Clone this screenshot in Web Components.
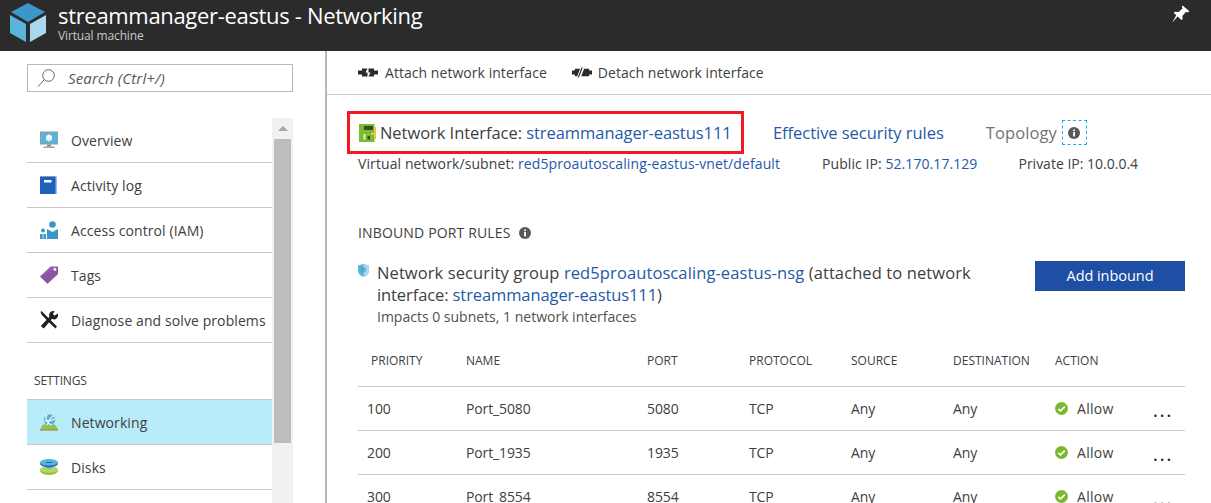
<!DOCTYPE html>
<html><head><meta charset="utf-8"><title>Networking</title>
<style>
html,body{margin:0;padding:0;height:503px;overflow:hidden;background:#fff;font-family:"Open Sans","Noto Sans",sans-serif;color:#404040}
</style></head><body>
<az-app></az-app>
<script>
const ICONS={
cube:`<svg width="36" height="40" viewBox="0 0 36 40"><path d="M18 0 35 9 18 19 1 9Z" fill="#3b97c9"/><path d="M0 12 16 21V39L0 30Z" fill="#59b4d9"/><path d="M36 12 20 21V39L36 30Z" fill="#a9d8ee"/></svg>`,
pin:`<svg width="19" height="19" viewBox="0 0 18 18"><path d="M11 0.5 17.5 6 15.8 7 14.3 6.4 10.8 10.5 11 13.5 9.8 14.3 6.3 10.8 1 16.8 5 9.8 2.7 7.6 3.6 6.3 7.3 6.6 11 3 10.2 1.6Z" fill="#fff"/></svg>`,
search:`<svg width="20" height="20" viewBox="0 0 20 20" fill="none" stroke="#666" stroke-width="1"><circle cx="12.5" cy="7.5" r="5.8"/><path d="M8.3 11.7 2 18.5"/></svg>`,
overview:`<svg width="18" height="18" viewBox="0 0 18 18"><rect x="0" y="1" width="18" height="12" fill="#59b4d9"/><rect x="0" y="1" width="18" height="12" fill="none" stroke="#9a9a9a" stroke-width="1"/><path d="M9 3.5 12 5.2V8.7L9 10.4 6 8.7V5.2Z" fill="#e6f4fa"/><path d="M9 7 12 5.2 9 3.5 6 5.2Z" fill="#fff"/><rect x="7" y="13.500" width="4" height="2" fill="#8a8a8a"/><rect x="3.500" y="15.500" width="11" height="1.500" fill="#a0a0a0"/></svg>`,
log:`<svg width="18" height="18" viewBox="0 0 18 18"><rect x="1" y="0.500" width="16" height="17.500" fill="#9dbce6"/><rect x="0" y="0.500" width="15.500" height="17.500" fill="#1e62bd"/><rect x="4" y="4" width="7.500" height="2.500" fill="#fff"/></svg>`,
iam:`<svg width="18" height="18" viewBox="0 0 18 18"><circle cx="12.500" cy="3.500" r="3.300" fill="#3999c6"/><path d="M7 8 12.500 11 18 8V18H7Z" fill="#3999c6"/><circle cx="3" cy="9.500" r="2" fill="#3999c6"/><path d="M0 13H6V18H0Z" fill="#3999c6"/><path d="M3 13V18" stroke="#fff" stroke-width=".7"/></svg>`,
tag:`<svg width="18" height="18" viewBox="0 0 18 18"><path d="M0 10.500 10.500 0.500H18V8L7.500 17.800Z" fill="#9e5fb0"/><path d="M0 10.500 7.500 17.800 18 8V0.500Z" fill="#7f4a92" opacity=".55"/><circle cx="15" cy="3.500" r="1.400" fill="#fff"/></svg>`,
tools:`<svg width="18" height="18" viewBox="0 0 18 18"><path d="M1.500 0 8 6.500 9.800 8.300 17 15.500 15.500 17.500 7.500 10 1.500 3.500 0.500 1Z" fill="#1f1f1f"/><path d="M17.500 2.500A4 4 0 0 1 12 7.800L3.800 17.500 0.800 15 9.500 5.800A4 4 0 0 1 14.800 0.500L12.800 2.800 14.500 4.700Z" fill="#1f1f1f"/></svg>`,
net:`<svg width="18" height="17" viewBox="0 0 18 17"><path d="M3 10.500H15L18 15.500H0Z" fill="#8cc63f"/><rect x="0" y="15" width="18" height="1.700" fill="#a89a64"/><circle cx="9.500" cy="6" r="5.700" fill="#59b4d9"/><path d="M7 .8C4.500 4.500 7 9 11.500 11.300M13.500 2C10.500 3.500 8.500 6.500 7.500 11.200M4.500 6.500C7.500 7.500 11 7 14.800 5" stroke="#fff" stroke-width="1.100" fill="none"/></svg>`,
disk:`<svg width="18" height="16" viewBox="0 0 18 16"><ellipse cx="9" cy="11.800" rx="9" ry="4.200" fill="#8cc63f"/><ellipse cx="9" cy="10.500" rx="9" ry="3.300" fill="#b4d85f"/><rect x="6.500" y="6.500" width="5" height="3.500" fill="#7fa8c8"/><ellipse cx="9" cy="4.500" rx="9" ry="3.800" fill="#1e62bd"/><ellipse cx="9" cy="3.300" rx="9" ry="3.300" fill="#59b4d9"/><rect x="6" y="3" width="6" height="1" fill="#1e62bd"/></svg>`,
attach:`<svg width="20" height="9" viewBox="0 0 20 9" fill="#2b2b2b"><path d="M0 2.500H4V.5H9.500L7.500 4.500H9.500V8.500H4V6.500H0Z"/><path d="M20 6.500H16V8.500H10.500L12.500 4.500H10.500V.5H16V2.500H20Z"/></svg>`,
detach:`<svg width="20" height="11" viewBox="0 0 21 11" fill="#2b2b2b" style="margin-right:-1px"><path d="M0 3.500H3V1.500H8.500L5.500 9.500H3V7.500H0Z"/><path d="M10 .2H11.300L7.300 10.800H6Z"/><path d="M21 3.500H18V1.500H12.700L9.700 9.500H18V7.500H21Z"/></svg>`,
nic:`<svg width="17" height="18" viewBox="0 0 17 18"><rect x="0" y="0" width="15.500" height="18" fill="#7cbb2e"/><rect x="15.500" y="3" width="1.500" height="12" fill="#f2c811"/><rect x="5" y="2" width="9" height="4" fill="#3a4a2a"/><rect x="4.500" y="10" width="2" height="5.500" fill="#dfeecb"/><rect x="8.500" y="12" width="2.500" height="3.500" fill="#3a4a2a"/><rect x="12.500" y="9" width="2" height="1.500" fill="#dfeecb"/></svg>`,
info:`<svg width="12" height="12" viewBox="0 0 11 11"><circle cx="5.500" cy="5.500" r="5.500" fill="#595959"/><rect x="4.700" y="4.600" width="1.700" height="4" fill="#fff"/><rect x="4.700" y="2.300" width="1.700" height="1.500" fill="#fff"/></svg>`,
shield:`<svg width="11" height="13" viewBox="0 0 11 13"><path d="M5.500 0 11 1.500V6.500C11 10 8 12 5.500 13 3 12 0 10 0 6.500V1.500Z" fill="#59b4d9"/><path d="M5.500 0 11 1.500V6.500C11 10 8 12 5.500 13Z" fill="#a9d8ee"/><path d="M5.500 3 8 4V7L5.500 9 3 7V4Z" fill="#3999c6" opacity=".6"/></svg>`,
allow:`<svg width="13" height="13" viewBox="0 0 13 13"><circle cx="6.500" cy="6.500" r="6.500" fill="#7ab92d"/><path d="M3.300 6.800 5.500 8.900 9.800 4.600" fill="none" stroke="#fff" stroke-width="1.700"/></svg>`
};
function comp(name,html,init){
  customElements.define(name,class extends HTMLElement{
    constructor(){super();this.attachShadow({mode:'open'});}
    connectedCallback(){this.shadowRoot.innerHTML=typeof html==='function'?html(this):html;if(init)init(this);}
  });
}
comp('az-header',h=>`<style>
:host{display:flex;height:51px;background:#2b2b2b;color:#fff;box-sizing:border-box;padding:3px 21px 0 10px;overflow:hidden;position:relative}
.ic{width:36px;height:40px;flex:none}
.t{margin-left:12px;display:flex;flex-direction:column;flex:1}
h1{margin:-2px 0 0;font-weight:400;font-size:22px;line-height:28px;letter-spacing:-.32px;white-space:nowrap}
small{font-size:12px;line-height:14px;margin-top:0;color:#c8c8c8;letter-spacing:-.13px}
.pin{margin-top:2px;flex:none}
</style><div class="ic">${ICONS.cube}</div><div class="t"><h1>${h.getAttribute('title')}</h1><small>${h.getAttribute('sub')}</small></div><div class="pin">${ICONS.pin}</div>`);
comp('az-search',h=>`<style>
:host{display:flex;align-items:center;box-sizing:border-box;width:266px;height:28px;border:1px solid #b8b8b8;padding-left:8px;background:#fff}
span{margin-left:12px;font-style:italic;font-size:15px;letter-spacing:.15px;color:#595959}
svg{display:block}
</style>${ICONS.search}<span>${h.getAttribute('text')}</span>`);
comp('az-nav-item',h=>`<style>
:host{display:flex;align-items:center;box-sizing:border-box;height:45px;border-bottom:1px solid #c8c8c8;color:#404040;font-size:14px;letter-spacing:.09px;white-space:nowrap}
:host([sel]){background:#b9ecfa;border-top:1px solid #c8c8c8;height:46px;margin-top:-1px}
i{width:18px;height:18px;margin:0 13px 0 13px;display:flex;align-items:center;flex:none}
svg{display:block}
</style><i>${ICONS[h.getAttribute('icon')]}</i><slot></slot>`);
comp('az-scrollbar',`<style>
:host{display:flex;flex-direction:column;width:21px;background:#f1f1f1;flex:none;align-items:center}
.up{height:21px;display:flex;align-items:center;justify-content:center;flex:none}
.up b{display:block;width:0;height:0;border:5px solid transparent;border-top:0;border-bottom:5px solid #a6a6a6}
.th{width:17px;height:304px;background:#bdbdbd;flex:none}
</style><div class="up"><b></b></div><div class="th"></div>`);
comp('az-sidebar',`<style>
:host{display:block;width:327px;box-sizing:border-box;border-right:2px solid #b8b8b8;padding:13px 0 0 27px;flex:none;overflow:hidden;height:452px}
.menu{display:flex;margin-top:26px;width:266px;height:400px}
.items{width:245px;flex:none}
</style><az-search text="Search (Ctrl+/)"></az-search><div class="menu"><div class="items"><slot></slot></div><az-scrollbar></az-scrollbar></div>`);
comp('az-section',h=>`<style>
:host{display:block;height:57px;box-sizing:border-box;padding:30px 0 0 7px;font-size:12px;line-height:16px;color:#404040;letter-spacing:-.2px}
</style><slot></slot>`);
comp('az-tool',h=>`<style>
:host{display:inline-flex;align-items:center;gap:7px;font-size:14px;letter-spacing:.045px;color:#404040;white-space:nowrap}
svg{display:block}
</style>${ICONS[h.getAttribute('icon')]}<slot></slot>`);
comp('az-summary',`<style>
:host{display:block;padding:16px 0 0 31px}
.r1{display:flex;align-items:center;height:43px;font-size:16.5px;letter-spacing:-.05px;white-space:nowrap}
.box{box-sizing:border-box;width:397px;height:43px;margin-left:-11px;border:3px solid #f01a24;display:flex;align-items:center;padding-left:9px;gap:4px;flex:none}
.box svg{display:block}
.eff{margin-left:29px;color:#2559a8}
.top{margin-left:42px;color:#737373;letter-spacing:.1px}
.dash{margin-left:5px;width:25px;height:25px;box-sizing:border-box;border:1px dashed #1eaee6;display:flex;align-items:center;justify-content:center}
.dash svg{display:block}
.r2{display:flex;font-size:14px;letter-spacing:.07px;line-height:18px;white-space:nowrap;margin-top:1px}
.r2 span:nth-child(1){letter-spacing:.1px}
.r2 span:nth-child(2){margin-left:42px}
.r2 span:nth-child(3){margin-left:41px;letter-spacing:0}
a{color:#2559a8}
</style><div class="r1"><div class="box">${ICONS.nic}<span>Network Interface: <a>streammanager-eastus111</a></span></div><span class="eff">Effective security rules</span><span class="top">Topology</span><span class="dash">${ICONS.info}</span></div>
<div class="r2"><span>Virtual network/subnet: <a>red5proautoscaling-eastus-vnet/default</a></span><span>Public IP: <a>52.170.17.129</a></span><span>Private IP: 10.0.0.4</span></div>`);
comp('az-nsg',`<style>
:host{display:block;padding:0 26px 0 31px;position:relative}
.h{display:flex;align-items:center;gap:8px;font-size:14px;letter-spacing:.15px;line-height:18px;padding-top:51px}
.h svg{display:block}
.g{display:flex;justify-content:space-between;margin-top:20px}
.l{display:flex;gap:8px}
.l svg{display:block;margin-top:2px;flex:none}
.t{font-size:16.5px;line-height:22px;letter-spacing:-.1px;width:640px}
.w{letter-spacing:.1px}
.s{font-size:14px;line-height:18px;margin-top:2px;color:#505050}
a{color:#2559a8}
button{all:unset;box-sizing:border-box;width:150px;height:30px;background:#1e4fa5;color:#fff;text-align:center;font-size:14.5px;letter-spacing:-.05px;line-height:28px;margin-top:-1px}
</style><div class="h">INBOUND PORT RULES ${ICONS.info}</div>
<div class="g"><div class="l">${ICONS.shield}<div><div class="t"><span class="w">Network security group <a>red5proautoscaling-eastus-nsg</a> (attached to network</span><br>interface: <a>streammanager-eastus111</a>)</div><div class="s">Impacts 0 subnets, 1 network interfaces</div></div></div><button>Add inbound</button></div>`);
const cols='grid-template-columns:99px 181px 102px 102px 102px 102px 1fr';
comp('az-rules-head',`<style>
:host{display:grid;grid-template-columns:95px 181px 102px 102px 102px 102px 1fr;height:58px;box-sizing:border-box;padding:24px 0 0 13px;font-size:12px;line-height:16px;color:#404040;border-bottom:1px solid #c8c8c8}
</style><span>PRIORITY</span><span>NAME</span><span>PORT</span><span>PROTOCOL</span><span>SOURCE</span><span>DESTINATION</span><span>ACTION</span>`);
comp('az-rule',h=>`<style>
:host{display:grid;${cols};height:44px;box-sizing:border-box;padding:0 0 0 9px;align-items:center;font-size:14px;letter-spacing:-.12px;color:#404040;border-bottom:1px solid #c8c8c8}
.a{display:flex;align-items:center;gap:9px;position:relative;letter-spacing:.3px}
.a svg{display:block}
.m{margin-left:auto;margin-right:12px;font-size:20px;letter-spacing:1.5px;color:#222;line-height:20px;transform:translateY(1px)}
</style><span>${h.getAttribute('p')}</span><span>${h.getAttribute('n')}</span><span>${h.getAttribute('o')}</span><span>TCP</span><span>Any</span><span>Any</span><span class="a">${ICONS.allow}Allow<span class="m">...</span></span>`);
comp('az-table',`<style>:host{display:block;margin:3px 26px 0 31px}</style><slot></slot>`);
comp('az-main',`<style>
:host{display:block;flex:1;min-width:0;overflow:hidden}
.bar{height:44px;box-sizing:border-box;border-bottom:1px solid #c8c8c8;display:flex;align-items:center;gap:25px;padding:0 0 0 31px}
</style><div class="bar"><az-tool icon="attach">Attach network interface</az-tool><az-tool icon="detach">Detach network interface</az-tool></div><az-summary></az-summary><az-nsg></az-nsg><slot></slot>`);
comp('az-app',`<style>
:host{display:block;height:503px;overflow:hidden}
.body{display:flex;height:452px}
</style><az-header title="streammanager-eastus - Networking" sub="Virtual machine"></az-header>
<div class="body"><az-sidebar>
<az-nav-item icon="overview">Overview</az-nav-item>
<az-nav-item icon="log">Activity log</az-nav-item>
<az-nav-item icon="iam">Access control (IAM)</az-nav-item>
<az-nav-item icon="tag">Tags</az-nav-item>
<az-nav-item icon="tools">Diagnose and solve problems</az-nav-item>
<az-section>SETTINGS</az-section>
<az-nav-item icon="net" sel>Networking</az-nav-item>
<az-nav-item icon="disk">Disks</az-nav-item>
</az-sidebar>
<az-main><az-table><az-rules-head></az-rules-head>
<az-rule p="100" n="Port_5080" o="5080"></az-rule>
<az-rule p="200" n="Port_1935" o="1935"></az-rule>
<az-rule p="300" n="Port_8554" o="8554"></az-rule>
</az-table></az-main></div>`);
</script></body></html>
